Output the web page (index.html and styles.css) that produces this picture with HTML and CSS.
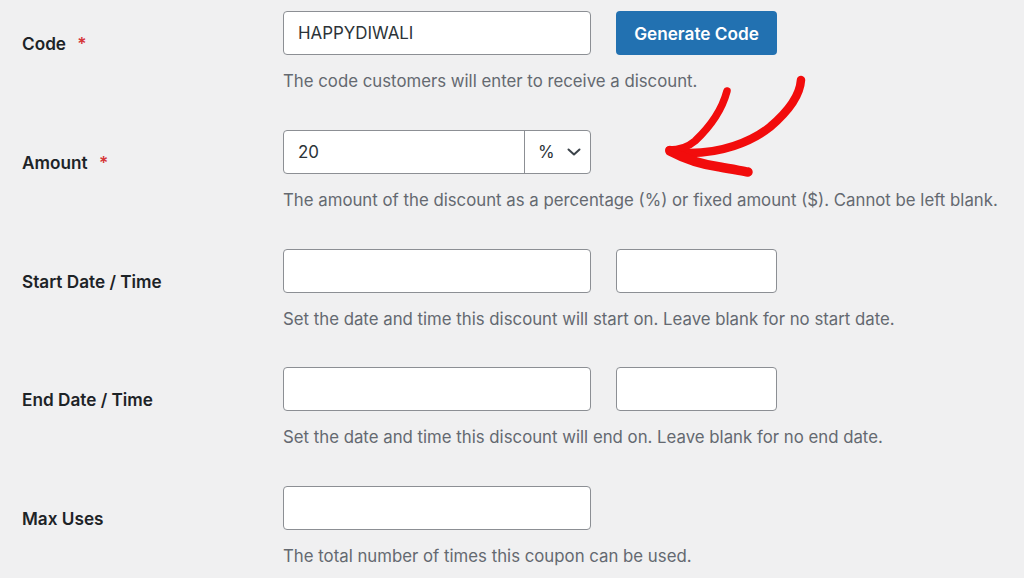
FILE: index.html
```html
<!DOCTYPE html>
<html lang="en">
<head>
<meta charset="utf-8">
<title>Discount</title>
<link rel="stylesheet" href="styles.css">
</head>
<body>
<div class="page">
  <div class="form">
    <div class="row">
      <div class="label">Code <span class="req">*</span></div>
      <div class="field">
        <div class="controls">
          <div class="input wide"><span class="val">HAPPYDIWALI</span></div>
          <div class="btn">Generate Code</div>
        </div>
        <p class="desc">The code customers will enter to receive a discount.</p>
      </div>
    </div>
    <div class="row">
      <div class="label">Amount <span class="req">*</span></div>
      <div class="field">
        <div class="controls">
          <div class="group">
            <div class="num"><span class="val">20</span></div>
            <div class="sel"><span class="pct">%</span>
              <svg class="chev" width="14" height="8" viewBox="0 0 14 8"><path d="M1.5 1.5 L7 6.5 L12.5 1.5" fill="none" stroke="#3c434a" stroke-width="2" stroke-linecap="round" stroke-linejoin="round"/></svg>
            </div>
          </div>
        </div>
        <p class="desc">The amount of the discount as a percentage (%) or fixed amount ($). Cannot be left blank.</p>
      </div>
    </div>
    <div class="row">
      <div class="label">Start Date / Time</div>
      <div class="field">
        <div class="controls">
          <div class="input wide"></div>
          <div class="input small"></div>
        </div>
        <p class="desc">Set the date and time this discount will start on. Leave blank for no start date.</p>
      </div>
    </div>
    <div class="row">
      <div class="label">End Date / Time</div>
      <div class="field">
        <div class="controls">
          <div class="input wide"></div>
          <div class="input small"></div>
        </div>
        <p class="desc">Set the date and time this discount will end on. Leave blank for no end date.</p>
      </div>
    </div>
    <div class="row">
      <div class="label">Max Uses</div>
      <div class="field">
        <div class="controls">
          <div class="input wide"></div>
        </div>
        <p class="desc">The total number of times this coupon can be used.</p>
      </div>
    </div>
  </div>
  <svg class="arrow" width="200" height="120" viewBox="0 0 200 120">
    <g fill="none" stroke="#f20c0c" stroke-linecap="round" stroke-linejoin="round">
      <path d="M151 15 C150 30 140 45 120 62 C100 78 70 88 40 88 C30 88 22 86 20 85" stroke-width="8.5"/>
      <path d="M77 26 C72 45 62 60 45 76 C38 82 28 85 19 85" stroke-width="7.5"/>
      <path d="M20 86 C35 94 55 100 70 102 C82 104 92 106 98 107" stroke-width="9.5"/>
    </g>
  </svg>
</div>
</body>
</html>
```

FILE: styles.css
```css
* { box-sizing: border-box; }
html, body { margin: 0; padding: 0; }
body {
  background: #f0f0f1;
  font-family: Inter, "Noto Sans", "Liberation Sans", sans-serif;
  color: #1d2327;
  width: 1024px;
  height: 578px;
  overflow: hidden;
}
.page {
  position: relative;
  padding: 11px 0 0 22px;
}
.form {
  display: flex;
  flex-direction: column;
}
.row {
  display: grid;
  grid-template-columns: 261px 1fr;
  height: 118.75px;
}
.label {
  font-size: 17.2px;
  font-weight: 600;
  line-height: 24px;
  padding-top: 21px;
  color: #1d2327;
}
.req {
  color: #d63638;
  margin-left: 7px;
}
.controls {
  display: flex;
  gap: 25px;
  height: 44px;
}
.input {
  height: 44px;
  background: #fff;
  border: 1px solid #8c8f94;
  border-radius: 4px;
  display: flex;
  align-items: center;
  padding-left: 14px;
}
.wide { width: 308px; }
.small { width: 161px; }
.val {
  font-size: 16.9px;
  color: #2c3338;
}
.btn {
  width: 161px;
  height: 44px;
  background: #2271b1;
  border-radius: 4px;
  color: #fff;
  font-size: 17.2px;
  font-weight: 600;
  display: flex;
  align-items: center;
  justify-content: center;
}
.group {
  display: flex;
  width: 308px;
  height: 44px;
  background: #fff;
  border: 1px solid #8c8f94;
  border-radius: 4px;
}
.num {
  width: 241px;
  border-right: 1px solid #8c8f94;
  display: flex;
  align-items: center;
  padding-left: 14px;
}
.sel {
  flex: 1;
  display: flex;
  align-items: center;
  padding-left: 13px;
  gap: 12px;
}
.pct {
  font-size: 16.9px;
  color: #2c3338;
}
.desc {
  margin: 14px 0 0;
  font-size: 16.8px;
  line-height: 24px;
  color: #646970;
}
.arrow {
  position: absolute;
  left: 650px;
  top: 65px;
}
```
